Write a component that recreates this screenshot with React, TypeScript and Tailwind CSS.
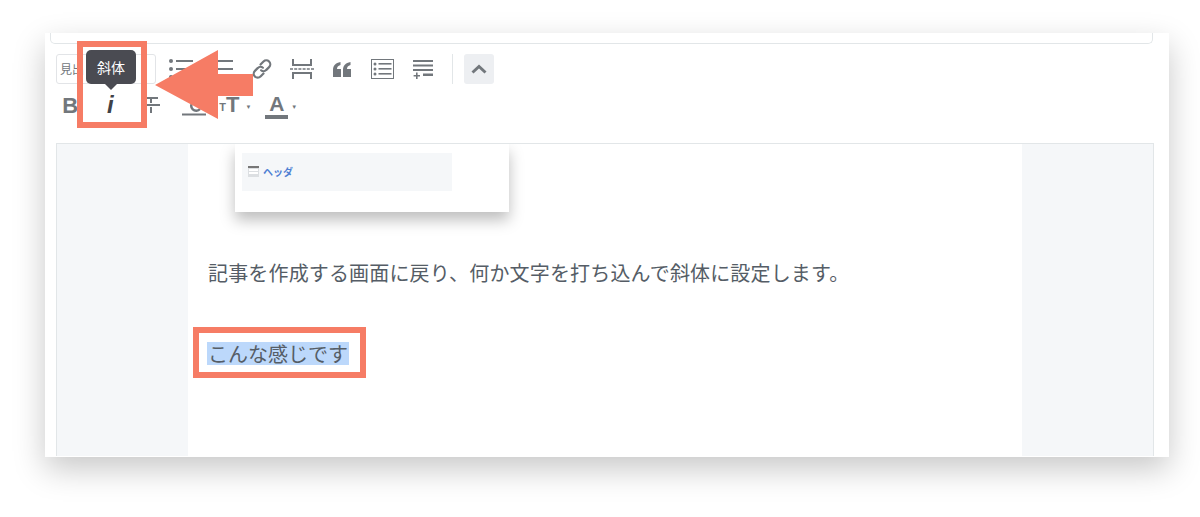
const iconColor = "#72777c";

const ToolButton = ({ children }: { children: React.ReactNode }) => (
  <div className="flex h-[32px] w-[40.3px] shrink-0 items-center justify-center">{children}</div>
);

const BulletList = () => (
  <svg width="26" height="22" viewBox="0 0 26 22" fill={iconColor}>
    <circle cx="3" cy="3" r="2" />
    <circle cx="3" cy="11" r="2" />
    <circle cx="3" cy="19" r="2" />
    <rect x="8" y="2" width="17" height="2" />
    <rect x="8" y="10" width="17" height="2" />
    <rect x="8" y="18" width="17" height="2" />
  </svg>
);

const OrderedList = () => (
  <svg width="26" height="22" viewBox="0 0 26 22" fill={iconColor}>
    <rect x="8" y="2" width="17" height="2" />
    <rect x="8" y="10" width="17" height="2" />
    <rect x="8" y="18" width="17" height="2" />
  </svg>
);

const LinkIcon = () => (
  <svg width="22" height="22" viewBox="0 0 22 22" fill="none" stroke={iconColor} strokeWidth="2.2" strokeLinecap="round">
    <path d="M9.5 6.5 12.5 3.5a3.6 3.6 0 0 1 5.6 5.6l-3 3a3.6 3.6 0 0 1-5 .2" />
    <path d="M12.5 15.5 9.5 18.5a3.6 3.6 0 0 1-5.6-5.6l3-3a3.6 3.6 0 0 1 5-.2" />
  </svg>
);

const MoreIcon = () => (
  <svg width="24" height="20" viewBox="0 0 24 20" fill={iconColor}>
    <path d="M2 0h2v5h16V0h2v7H2z" />
    <path d="M0 9.2h3v1.6H0zM4.2 9.2h3v1.6h-3zM8.4 9.2h3v1.6h-3zM12.6 9.2h3v1.6h-3zM16.8 9.2h3v1.6h-3zM21 9.2h3v1.6h-3z" />
    <path d="M2 13h20v7h-2v-5H4v5H2z" />
  </svg>
);

const QuoteIcon = () => (
  <svg width="18" height="15" viewBox="0 0 18 15" fill={iconColor}>
    <path d="M0 15V8C0 3.5 2.5 1 7.5 0v3C5 3.7 4 5 4 7h4v8zM10 15V8c0-4.500 2.500-7 7.500-8v3C15 3.700 14 5 14 7h4v8z" />
  </svg>
);

const ListBoxIcon = () => (
  <svg width="23" height="20" viewBox="0 0 23 20" fill={iconColor}>
    <path d="M0 0h23v20H0zM1 1v18h21V1z" />
    <circle cx="4" cy="5" r="1.500" />
    <circle cx="4" cy="10" r="1.500" />
    <circle cx="4" cy="15" r="1.500" />
    <rect x="7.500" y="4" width="13" height="1.600" />
    <rect x="7.500" y="9" width="13" height="1.600" />
    <rect x="7.500" y="14" width="13" height="1.600" />
  </svg>
);

const TableRowIcon = () => (
  <svg className="ml-[2px]" width="21" height="19" viewBox="0 0 21 19" fill={iconColor}>
    <rect x="0" y="0" width="20" height="2" />
    <rect x="0" y="4.500" width="20" height="2" />
    <rect x="0" y="9" width="20" height="2" />
    <rect x="10" y="13.500" width="10" height="2.500" />
    <path d="M3 12.500h1.600v2.500H7v1.500H4.600V19H3v-2.500H.6V15H3z" />
  </svg>
);

const App = () => {
  return (
    <div className="relative h-[517px] w-[1200px] overflow-hidden bg-white pl-[45px] pt-[33px] font-['Noto_Sans_CJK_JP','Liberation_Sans',sans-serif]">
      <div className="h-[424px] w-[1124px] bg-white shadow-[0_12px_30px_rgba(0,0,0,0.22)]">
        {/* end of the title box above the toolbar */}
        <div className="ml-[5px] h-[11px] w-[1103px] rounded-b-[5px] border border-t-0 border-[#e2e6e8]" />

        <div className="ml-[11px] mt-[10px] flex h-[30px] items-center">
          <div className="flex h-[30px] w-[100px] items-center rounded-[3px] border border-[#e2e4e7] pl-[3px] text-[12px] text-[#72777c]">
            見出し
          </div>
          <div className="ml-[5px] flex items-center">
            <ToolButton><BulletList /></ToolButton>
            <ToolButton><OrderedList /></ToolButton>
            <ToolButton><LinkIcon /></ToolButton>
            <ToolButton><MoreIcon /></ToolButton>
            <ToolButton><QuoteIcon /></ToolButton>
            <ToolButton><ListBoxIcon /></ToolButton>
            <ToolButton><TableRowIcon /></ToolButton>
          </div>
          <div className="ml-[9px] h-[30px] w-px bg-[#e2e6e8]" />
          <div className="ml-[11px] flex h-[30px] w-[30px] items-center justify-center rounded-[3px] bg-[#edeff2]">
            <svg width="16" height="10" viewBox="0 0 16 10" fill="none" stroke={iconColor} strokeWidth="3">
              <path d="M1.500 8.500 8 2.500l6.500 6" />
            </svg>
          </div>
        </div>

        <div className="ml-[5px] mt-[5px] flex h-[32px] items-center font-['Liberation_Sans',sans-serif] text-[#72777c]">
          <ToolButton><span className="text-[22px] font-bold">B</span></ToolButton>
          <ToolButton><span className="text-[24px] font-bold italic text-[#3f4247]">i</span></ToolButton>
          <ToolButton>
            <svg width="20" height="20" viewBox="0 0 20 20" fill={iconColor}>
              <path d="M3 2h14v2h-6v4H9V4H3zM1 9h18v2H1zM9 12h2v6H9z" />
            </svg>
          </ToolButton>
          <ToolButton>
            <svg className="ml-[6px]" width="26" height="22" viewBox="0 0 26 22" fill="none" stroke={iconColor}>
              <path d="M19 8.500A5 5 0 1 0 19 15" strokeWidth="2.500" />
              <rect x="1" y="19.500" width="24" height="2" fill={iconColor} stroke="none" />
            </svg>
          </ToolButton>
          <div className="ml-[8px] flex h-[32px] items-center font-bold">
            <span className="mt-[5px] text-[11px] leading-none">T</span>
            <span className="text-[22px] leading-none">T</span>
            <span className="ml-[6px] mt-[3px] text-[6px] leading-none">▼</span>
          </div>
          <div className="ml-[14px] flex h-[32px] items-center">
            <span className="w-[23px] border-b-[4px] border-[#72777c] text-center text-[21px] font-bold leading-[23px]">A</span>
            <span className="ml-[3px] mt-[3px] text-[6px] leading-none">▼</span>
          </div>
        </div>

        <div className="ml-[11px] mt-[22px] flex h-[313px] w-[1098px] justify-center border border-b-0 border-[#e2e6e8] bg-[#f5f7f9]">
          <div className="h-full w-[834px] overflow-hidden bg-white pl-[47px]">
            <div className="h-[68px] w-[274px] bg-white pl-[7px] pt-[9px] shadow-[0_8px_14px_rgba(0,0,0,0.26)]">
              <div className="flex h-[38px] w-[210px] items-center bg-[#f5f7f9] pb-[2px] pl-[6px]">
                <div className="flex h-[11px] w-[11px] flex-col gap-px border-t-2 border-[#777] bg-[#dcdfe2] p-px">
                  <div className="h-[2px] bg-white" />
                  <div className="h-[2px] bg-white" />
                </div>
                <span className="ml-[4px] text-[10px] font-bold text-[#4f80d3]">ヘッダ</span>
              </div>
            </div>
            <p className="-ml-[27px] mt-[46px] text-[20px] leading-[30px] tracking-[0.16px] text-[#555d66]">
              記事を作成する画面に戻り、何か文字を打ち込んで斜体に設定します。
            </p>
            <p className="-ml-[28px] mt-[54px] w-fit bg-[#bcd8fb] px-px text-[20px] leading-[23px] text-[#555d66]">
              こんな感じです
            </p>
          </div>
        </div>
      </div>

      {/* annotations over the screenshot */}
      <div className="absolute left-[86px] top-[50px] flex h-[34px] w-[50px] items-center justify-center rounded-[5px] bg-[#4a4b52] text-[14px] text-white">
        斜体
        <div className="absolute -bottom-[6px] left-[19px] h-0 w-0 border-x-[6px] border-t-[6px] border-x-transparent border-t-[#4a4b52]" />
      </div>
      <div className="absolute left-[77px] top-[41px] h-[87px] w-[70px] border-[6.500px] border-[#f67c65]" />
      <div className="absolute left-[193px] top-[327px] h-[51px] w-[173px] border-[6px] border-[#f67c65]" />
      <svg className="absolute left-[155px] top-[50px]" width="98" height="69" viewBox="0 0 98 69" fill="#f67c65">
        <path d="M0 35 63 0v24h35v22H63v23z" />
      </svg>
    </div>
  );
};

export default App;
